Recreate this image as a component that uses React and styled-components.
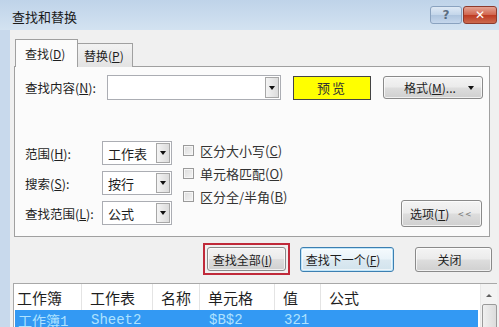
import React from "react";
import styled, { createGlobalStyle, css } from "styled-components";

const GlobalStyle = createGlobalStyle`
  html, body {
    margin: 0;
    padding: 0;
    background: #f0f0f0;
  }
  * {
    box-sizing: border-box;
  }
`;

const Window = styled.div`
  width: 499px;
  height: 327px;
  overflow: hidden;
  display: flex;
  flex-direction: column;
  font-family: "Noto Sans CJK SC", "Microsoft YaHei", sans-serif;
  font-size: 12px;
  color: #1e1e1e;
  background: #f0f0f0;
`;

const TitleBar = styled.div`
  height: 30px;
  flex: none;
  display: flex;
  align-items: center;
  padding: 0 2px 0 12px;
  background: linear-gradient(#bfd3e9, #d3e2f1);
`;

const Title = styled.div`
  flex: 1;
  font-size: 13px;
  color: #1a1a1a;
  margin-top: 2px;
`;

const CaptionButton = styled.div`
  height: 18px;
  display: flex;
  align-items: center;
  justify-content: center;
  border-radius: 3px;
  font-size: 12px;
  font-weight: bold;
  font-family: "DejaVu Sans", sans-serif;
  color: #fff;
  ${(p) =>
    p.$close
      ? css`
          width: 34px;
          border: 1px solid #8d3a2c;
          background: linear-gradient(#e4a393, #d0644d 50%, #bd3a22 51%, #cc6a4f);
        `
      : css`
          width: 32px;
          margin-right: 1px;
          border: 1px solid #8aa2bf;
          background: linear-gradient(#dfe9f5, #c3d5ea 50%, #aec4de 51%, #c5d7ec);
          color: #5b6d80;
        `}
`;

const Body = styled.div`
  flex: 1;
  display: flex;
  flex-direction: column;
  border-left: 10px solid #c8d9ec;
  padding-top: 9px;
`;

const TabBar = styled.div`
  display: flex;
  align-items: flex-end;
  margin-left: 5px;
  position: relative;
  z-index: 1;
  margin-bottom: -1px;
`;

const Tab = styled.div`
  display: flex;
  align-items: center;
  border: 1px solid #a0a0a0;
  border-bottom: none;
  ${(p) =>
    p.$active
      ? css`
          height: 28px;
          width: 63px;
          padding-left: 9px;
          background: #fbfbfb;
        `
      : css`
          height: 24px;
          width: 55px;
          padding-left: 6px;
          border-left: none;
          background: linear-gradient(#f2f2f2, #e3e3e3);
        `}
`;

const Key = styled.u`
  text-underline-offset: 1px;
`;

const Panel = styled.div`
  margin-left: 4px;
  width: 476px;
  height: 171px;
  border: 1px solid #a0a0a0;
  background: #fbfbfb;
  padding: 8px 0 11px 10px;
  display: flex;
  flex-direction: column;
`;

const FindRow = styled.div`
  display: flex;
  align-items: center;
  height: 25px;
`;

const Label = styled.div`
  width: ${(p) => p.$w || 77}px;
  flex: none;
  white-space: nowrap;
  font-size: 12.5px;
`;

const TextBox = styled.div`
  width: ${(p) => p.$w}px;
  height: ${(p) => p.$h || 24}px;
  border: 1px solid #abadb3;
  background: #fff;
  display: flex;
  align-items: stretch;
  justify-content: space-between;
  padding: 1px;
  font-size: 13px;
`;

const BoxText = styled.div`
  padding-left: 4px;
  display: flex;
  align-items: center;
`;

const DropButton = styled.div`
  width: 14px;
  flex: none;
  display: flex;
  align-items: center;
  justify-content: center;
  border: 1px solid #a7a7a7;
  background: linear-gradient(90deg, #f4f4f4, #dcdcdc);
`;

const Arrow = styled.span`
  width: 0;
  height: 0;
  border-left: 3px solid transparent;
  border-right: 3px solid transparent;
  border-top: 4px solid #111;
`;

const Preview = styled.div`
  width: 78px;
  height: 24px;
  margin-left: 12px;
  border: 1px solid #444;
  background: #ffff00;
  display: flex;
  align-items: center;
  justify-content: center;
  font-size: 13px;
  letter-spacing: 2px;
  color: #333;
`;

const Button = styled.div`
  height: ${(p) => p.$h || 25}px;
  width: ${(p) => p.$w}px;
  flex: none;
  white-space: nowrap;
  display: flex;
  align-items: center;
  justify-content: ${(p) => (p.$pad ? "space-between" : "center")};
  padding: 0 8px 0 ${(p) => p.$pad || 0}px;
  border-radius: 3px;
  border: 1px solid #8a8a8a;
  background: linear-gradient(#f4f4f4, #ebebeb 48%, #dddddd 52%, #d0d0d0);
  box-shadow: inset 0 0 0 1px rgba(255, 255, 255, 0.7);
  ${(p) =>
    p.$focus &&
    css`
      border-color: #3c7fb1;
      box-shadow: inset 0 0 0 1px #bfe4f8, inset 0 0 0 2px rgba(255, 255, 255, 0.6);
      background: linear-gradient(#f5fafd, #e9f3f9 48%, #dbe9f1 52%, #d2e3ed);
    `}
`;

const Chevrons = styled.span`
  color: #777;
  font-size: 10px;
  letter-spacing: 2px;
`;

const OptionsArea = styled.div`
  flex: 1;
  display: flex;
  align-items: flex-start;
  margin-top: 41px;
  padding-right: 7px;
`;

const SelectColumn = styled.div`
  display: flex;
  flex-direction: column;
  gap: 6px;
`;

const SelectRow = styled.div`
  display: flex;
  align-items: center;
`;

const CheckColumn = styled.div`
  display: flex;
  flex-direction: column;
  gap: 5px;
  margin-left: 11px;
  flex: 1;
`;

const CheckRow = styled.div`
  display: flex;
  align-items: center;
  height: 18px;
  color: #333;
  font-size: 13px;
  white-space: nowrap;
`;

const Check = styled.span`
  width: 11px;
  height: 11px;
  margin-right: 6px;
  border: 1px solid #9a9a9a;
  background: linear-gradient(135deg, #dcdcdc, #f4f4f4);
  box-shadow: inset 0 0 0 1px #f6f6f6;
`;

const OptionsButtonWrap = styled.div`
  align-self: flex-end;
  margin-bottom: -2px;
`;

const ActionRow = styled.div`
  display: flex;
  align-items: center;
  justify-content: flex-end;
  margin-top: 6px;
  padding-right: 7px;
  gap: 10px;
`;

const Highlight = styled.div`
  border: 2px solid #c02a3a;
  padding: 2px;
`;

const CloseWrap = styled.div`
  margin-left: 11px;
`;

const Results = styled.div`
  margin-top: 8px;
  margin-left: 3px;
  margin-right: 2px;
  flex: 1;
  border-top: 1px solid #a8a8a8;
  border-left: 1px solid #a8a8a8;
  background: #fff;
  display: flex;
`;

const Grid = styled.div`
  flex: 1;
  display: flex;
  flex-direction: column;
`;

const ColumnsRow = styled.div`
  display: grid;
  grid-template-columns: 68px 71px 47px 75px 46px 1fr;
  align-items: center;
  height: ${(p) => (p.$header ? 26 : 19)}px;
  ${(p) =>
    p.$header
      ? css`
          font-size: 15px;
          color: #1e1e1e;
          background: #fff;
        `
      : css`
          margin: 0 2px 0 1px;
          font-family: "Liberation Mono", "Noto Sans CJK SC", monospace;
          font-size: 14px;
          color: #aee2ff;
          background: #3399f3;
        `}
`;

const Cell = styled.div`
  padding-left: ${(p) => (p.$first ? 3 : 8)}px;
  height: 100%;
  display: flex;
  align-items: center;
  white-space: nowrap;
  ${(p) =>
    p.$sep &&
    css`
      border-right: 1px solid #e4e4e4;
    `}
`;

const ScrollBar = styled.div`
  width: 17px;
  flex: none;
  display: flex;
  flex-direction: column;
  align-items: center;
  background: #f3f3f3;
  border-left: 1px solid #e8e8e8;
`;

const UpArrow = styled.span`
  margin-top: 10px;
  width: 0;
  height: 0;
  border-left: 3px solid transparent;
  border-right: 3px solid transparent;
  border-bottom: 3px solid #606060;
`;

const Thumb = styled.div`
  margin-top: 7px;
  width: 15px;
  height: 30px;
  border: 1px solid #9a9a9a;
  border-radius: 2px;
  background: linear-gradient(90deg, #f0f0f0, #dcdcdc);
`;

const columns = ["工作簿", "工作表", "名称", "单元格", "值", "公式"];
const result = ["工作簿1", "Sheet2", "", "$B$2", "321", ""];

function SelectBox({ value }) {
  return (
    <TextBox $w={70}>
      <BoxText>{value}</BoxText>
      <DropButton>
        <Arrow />
      </DropButton>
    </TextBox>
  );
}

export default function App() {
  return (
    <Window>
      <GlobalStyle />
      <TitleBar>
        <Title>查找和替换</Title>
        <CaptionButton>?</CaptionButton>
        <CaptionButton $close>✕</CaptionButton>
      </TitleBar>
      <Body>
        <TabBar>
          <Tab $active>
            查找(<Key>D</Key>)
          </Tab>
          <Tab>
            替换(<Key>P</Key>)
          </Tab>
        </TabBar>
        <Panel>
          <FindRow>
            <Label $w={82}>
              查找内容(<Key>N</Key>):
            </Label>
            <TextBox $w={174} $h={25}>
              <BoxText />
              <DropButton>
                <Arrow />
              </DropButton>
            </TextBox>
            <Preview>预览</Preview>
            <Button $w={100} $h={23} $pad={20} style={{ marginLeft: 12 }}>
              <span>
                格式(<Key>M</Key>)...
              </span>
              <Arrow />
            </Button>
          </FindRow>
          <OptionsArea>
            <SelectColumn>
              <SelectRow>
                <Label>
                  范围(<Key>H</Key>):
                </Label>
                <SelectBox value="工作表" />
              </SelectRow>
              <SelectRow>
                <Label>
                  搜索(<Key>S</Key>):
                </Label>
                <SelectBox value="按行" />
              </SelectRow>
              <SelectRow>
                <Label>
                  查找范围(<Key>L</Key>):
                </Label>
                <SelectBox value="公式" />
              </SelectRow>
            </SelectColumn>
            <CheckColumn>
              <CheckRow>
                <Check />
                区分大小写(<Key>C</Key>)
              </CheckRow>
              <CheckRow>
                <Check />
                单元格匹配(<Key>O</Key>)
              </CheckRow>
              <CheckRow>
                <Check />
                区分全/半角(<Key>B</Key>)
              </CheckRow>
            </CheckColumn>
            <OptionsButtonWrap>
              <Button $w={81} $h={27} $pad={8}>
                <span>
                  选项(<Key>T</Key>)
                </span>
                <Chevrons>&lt;&lt;</Chevrons>
              </Button>
            </OptionsButtonWrap>
          </OptionsArea>
        </Panel>
        <ActionRow>
          <Highlight>
            <Button $w={79} $h={24}>
              查找全部(<Key>I</Key>)
            </Button>
          </Highlight>
          <Button $w={94} $focus>
            查找下一个(<Key>F</Key>)
          </Button>
          <CloseWrap>
            <Button $w={77}>关闭</Button>
          </CloseWrap>
        </ActionRow>
        <Results>
          <Grid>
            <ColumnsRow $header>
              {columns.map((c, i) => (
                <Cell key={c} $first={i === 0} $sep={i < columns.length - 1}>
                  {c}
                </Cell>
              ))}
            </ColumnsRow>
            <ColumnsRow>
              {result.map((c, i) => (
                <Cell key={i} $first={i === 0}>
                  {c}
                </Cell>
              ))}
            </ColumnsRow>
          </Grid>
          <ScrollBar>
            <UpArrow />
            <Thumb />
          </ScrollBar>
        </Results>
      </Body>
    </Window>
  );
}
